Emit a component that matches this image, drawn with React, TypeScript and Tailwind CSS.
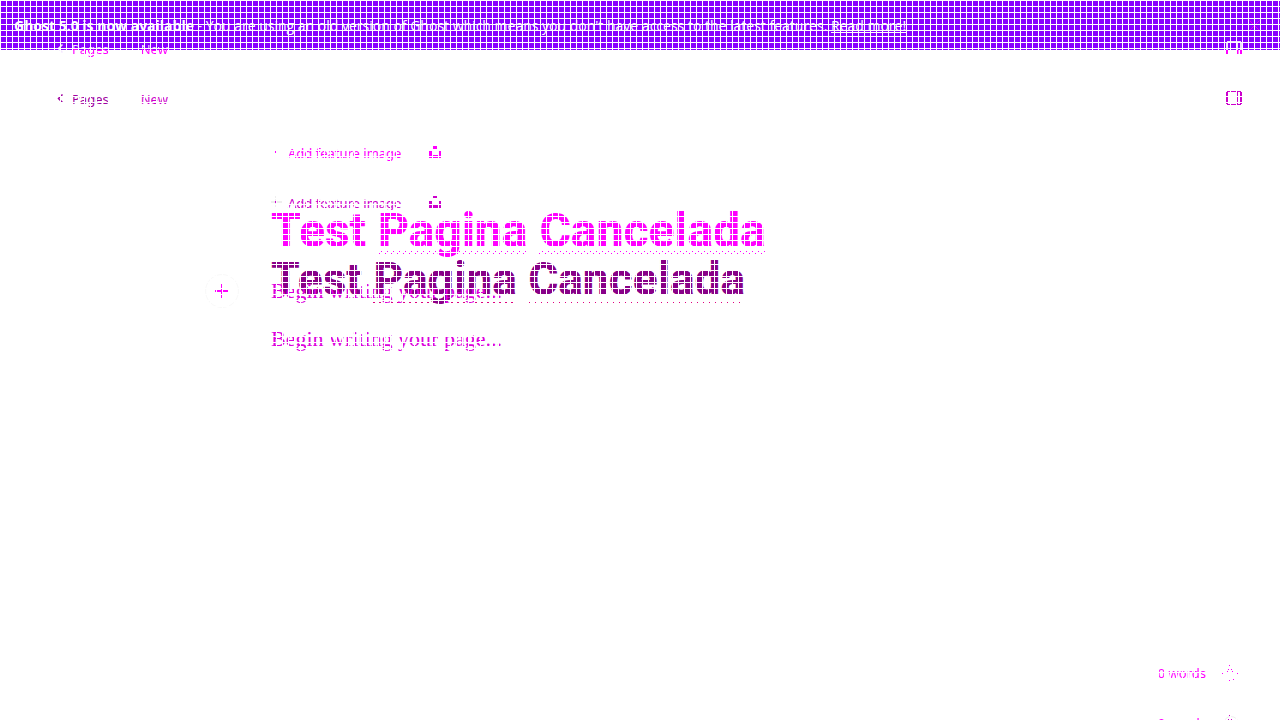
import React from "react";

type Tone = "bright" | "deep";

function Squiggle({ children, tone }: { children: string; tone: Tone }) {
  return (
    <span
      className={
        tone === "bright"
          ? "bg-[linear-gradient(90deg,#ff00ff_2px,transparent_2px),linear-gradient(90deg,transparent_3px,#ff00ff_3px,#ff00ff_4px,transparent_4px)] bg-[length:6px_1px] bg-[position:0_calc(100%-5px),0_calc(100%-7px)] bg-repeat-x"
          : "bg-[linear-gradient(90deg,#e0007f_2px,transparent_2px),linear-gradient(90deg,transparent_3px,#e0007f_3px,#e0007f_4px,transparent_4px)] bg-[length:6px_1px] bg-[position:0_calc(100%-3px),0_calc(100%-5px)] bg-repeat-x"
      }
    >
      {children}
    </span>
  );
}

function Editor({ tone }: { tone: Tone }) {
  const bright = tone === "bright";
  const link = bright
    ? "bg-linear-to-b from-[#f4e6ff] from-50% to-[#ff00ff] to-50% bg-clip-text text-transparent"
    : "text-[#a000a0]";
  return (
    <section className="flex h-screen w-full shrink-0 flex-col">
      <header className="flex h-[98px] items-center justify-between pr-[38px] pl-[57px] text-[13px] leading-5">
        <nav className="flex items-center">
          <a href="#pages" className="flex items-center gap-2">
            <svg width="7" height="10" viewBox="0 0 7 10" fill="none" strokeWidth="1.500" stroke={bright ? "#f4e6ff" : "#a000a0"}>
              <path d="M5.500 0.500L1.500 4.500L5.500 8.500" />
            </svg>
            <span className={link}>Pages</span>
          </a>
          <span className={bright ? "ml-8 " + link : "ml-8 text-[#cc00cc]"}>New</span>
        </nav>
        <button aria-label="Settings">
          <svg width="16" height="18" viewBox="0 0 16 18" fill="none" strokeWidth="2">
            <path d="M1 10V2M15 10V2" stroke={bright ? "#eeddff" : "#cc00cc"} />
            <path d="M1 1.500H15M11.500 2V10" strokeWidth="1" stroke={bright ? "#eeddff" : "#cc00cc"} />
            {bright ? (
              <path d="M1 10V14M11.500 10V14M15 10V14" stroke="#ff00ff" />
            ) : (
              <>
                <path d="M1 10V14M15 10V14" stroke="#cc00cc" />
                <path d="M1 14.500H15M11.500 10V14" strokeWidth="1" stroke="#cc00cc" />
              </>
            )}
          </svg>
        </button>
      </header>
      <main className="ml-[271px] flex grow flex-col pt-[43px]">
        <div className={bright ? "flex items-center text-[13px] leading-6 text-[#ff00ff]" : "flex items-center text-[13px] leading-6 text-[#cc00cc]"}>
          <button className="flex items-center gap-[6px]">
            <svg width="11" height="14" viewBox="0 0 11 14" fill="currentColor">
              {bright ? null : <path d="M0 5h11v2H0zM4 0h2v11H4z" fill="#eeeeee" />}
              <path d="M4 5h1v2H4z" />
            </svg>
            Add feature image
          </button>
          <button aria-label="Unsplash" className="ml-7">
            <svg width="14" height="16" viewBox="0 0 14 16" fill="currentColor">
              <path d="M4 1h4v3H4zM0 6h3v4h6V6h3v7H0z" />
            </svg>
          </button>
        </div>
        <h1 className={bright ? "mt-[34px] font-['Roboto',sans-serif] text-[48px] leading-[64px] font-extrabold text-[#ff00ff]" : "mt-[33px] font-['Roboto',sans-serif] text-[46px] leading-[62px] font-extrabold text-[#880088]"}>
          Test <Squiggle tone={tone}>Pagina</Squiggle> <Squiggle tone={tone}>Cancelada</Squiggle>
        </h1>
        <div className={bright ? "-ml-[66px] flex items-center gap-8 pt-[11px]" : "-ml-[66px] flex items-center gap-8 pt-3"}>
          {bright ? (
            <button aria-label="Add a card" className="grid size-[34px] place-items-center rounded-full border border-[#f9f9f9]">
              <svg width="14" height="14" viewBox="0 0 14 14" stroke="#ff00ff" fill="none"><path d="M0 7H14" strokeWidth="2" /><path d="M6.500 0V14" /></svg>
            </button>
          ) : (
            <span className="size-[34px]" />
          )}
          <p className="font-['Liberation_Serif',serif] text-[22px] leading-8 text-[#dd00dd]">Begin writing your page...</p>
        </div>
      </main>
      <footer className="flex h-[92px] items-center justify-end gap-4 pr-10 text-[13px] text-[#ff00ff]">
        0 words
        <svg width="18" height="18" viewBox="0 0 18 18" fill={bright ? "#ff00ff" : "#cc00cc"}>
          {bright ? null : <circle cx="9" cy="9" r="7.500" fill="none" stroke="#f0f0f0" />}
          <path d="M7 0h1v1H7zM6 4h1v1H6zM9 4h1v1H9zM5 6h1v1H5zM10 6h1v1h-1zM0 8h1v1H0zM15 8h1v1h-1zM7 15h1v1H7zM11 14h1v1h-1z" />
        </svg>
      </footer>
    </section>
  );
}

export default function App() {
  return (
    <div className="relative grid h-screen grid-cols-1 grid-rows-1 overflow-hidden bg-white font-['Noto_Sans',sans-serif]">
      <div className="col-start-1 row-start-1 flex min-h-0 flex-col">
        <div className="flex h-[50px] shrink-0 items-center justify-between bg-[#8800ff] pr-5 pl-[14px] font-['Open_Sans',sans-serif] text-[14px] text-white">
          <p>
            <strong>Ghost 5.0 is now available</strong> - You are using an old version of Ghost which means you don't have access to the latest features.{" "}
            <a href="#more" className="underline">Read more!</a>
          </p>
          <button aria-label="Close">
            <svg width="11" height="11" viewBox="0 0 11 11" stroke="#dd00ee"><path d="M0.500 0.500L10.500 10.500M10.500 0.500L0.500 10.500" /></svg>
          </button>
        </div>
        <Editor tone="deep" />
      </div>
      <div className="col-start-1 row-start-1 min-h-0">
        <Editor tone="bright" />
      </div>
      <div
        aria-hidden="true"
        className="pointer-events-none absolute inset-0 bg-[linear-gradient(90deg,#ffffff_1px,transparent_1px),linear-gradient(180deg,#ffffff_1px,transparent_1px)] bg-[length:6px_6px]"
      />
    </div>
  );
}
